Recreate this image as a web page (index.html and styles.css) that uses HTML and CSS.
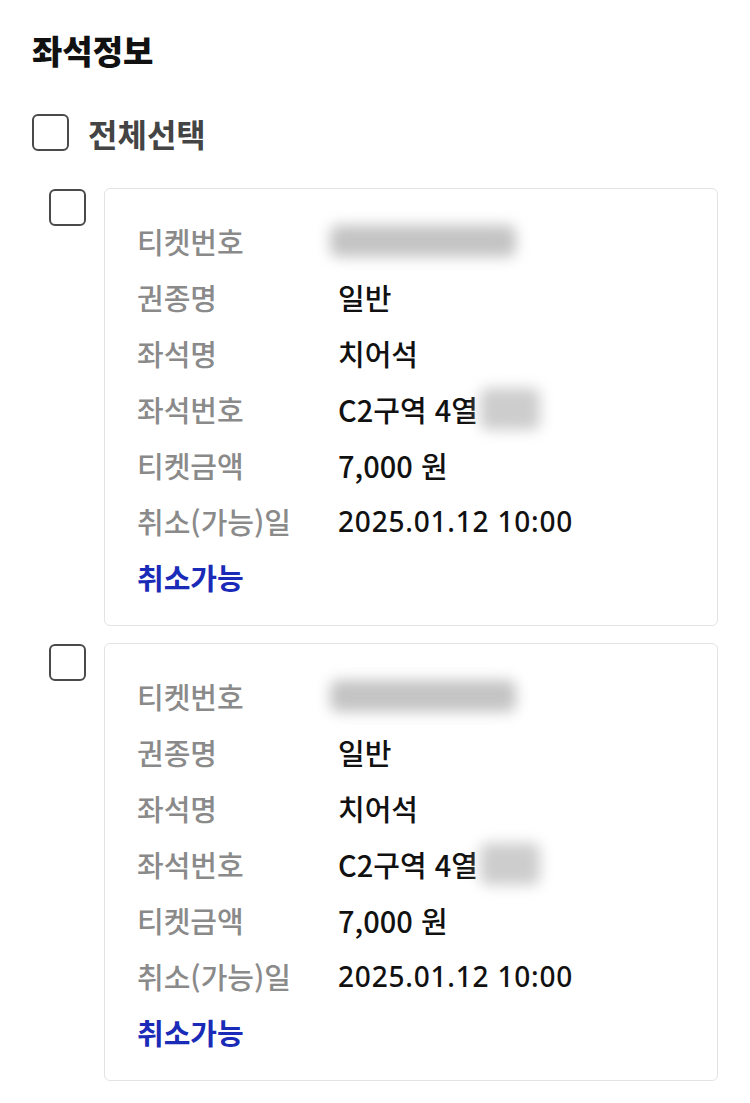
FILE: index.html
```html
<!DOCTYPE html>
<html lang="ko">
<head>
<meta charset="utf-8">
<link rel="stylesheet" href="styles.css">
</head>
<body>
<div class="page">
  <h1 class="title">좌석정보</h1>
  <div class="select-all">
    <span class="box"></span>
    <span class="select-label">전체선택</span>
  </div>

  <div class="ticket">
    <span class="box small"></span>
    <div class="card">
      <div class="row"><span class="lbl">티켓번호</span><span class="val"><span class="blur wide"></span></span></div>
      <div class="row"><span class="lbl">권종명</span><span class="val">일반</span></div>
      <div class="row"><span class="lbl">좌석명</span><span class="val">치어석</span></div>
      <div class="row"><span class="lbl">좌석번호</span><span class="val">C2구역 4열<span class="blur short"></span></span></div>
      <div class="row"><span class="lbl">티켓금액</span><span class="val">7,000 원</span></div>
      <div class="row"><span class="lbl">취소(가능)일</span><span class="val num">2025.01.12 10:00</span></div>
      <div class="row"><span class="link">취소가능</span></div>
    </div>
  </div>

  <div class="ticket">
    <span class="box small"></span>
    <div class="card">
      <div class="row"><span class="lbl">티켓번호</span><span class="val"><span class="blur wide"></span></span></div>
      <div class="row"><span class="lbl">권종명</span><span class="val">일반</span></div>
      <div class="row"><span class="lbl">좌석명</span><span class="val">치어석</span></div>
      <div class="row"><span class="lbl">좌석번호</span><span class="val">C2구역 4열<span class="blur short"></span></span></div>
      <div class="row"><span class="lbl">티켓금액</span><span class="val">7,000 원</span></div>
      <div class="row"><span class="lbl">취소(가능)일</span><span class="val num">2025.01.12 10:00</span></div>
      <div class="row"><span class="link">취소가능</span></div>
    </div>
  </div>
</div>
</body>
</html>
```

FILE: styles.css
```css
html, body {
  margin: 0;
  padding: 0;
  background: #ffffff;
}
body {
  font-family: "Noto Sans CJK KR", "Noto Sans", sans-serif;
  color: #111;
}
.page {
  width: 750px;
  padding: 30px 32px 0 32px;
  box-sizing: border-box;
}
.title {
  margin: 0;
  font-size: 33px;
  font-weight: 900;
  line-height: 40px;
  color: #111;
}
.select-all {
  display: flex;
  align-items: center;
  gap: 19px;
  margin-top: 44px;
  height: 37px;
}
.box {
  width: 37px;
  height: 37px;
  box-sizing: border-box;
  border: 2px solid #4a4a4a;
  border-radius: 6px;
  flex: none;
}
.select-label {
  font-size: 32px;
  font-weight: 700;
  color: #444;
}
.ticket {
  display: flex;
  align-items: flex-start;
  gap: 18px;
  margin-top: 37px;
  margin-left: 17px;
}
.ticket + .ticket {
  margin-top: 17px;
}
.box.small {
  margin-top: 1px;
}
.card {
  width: 614px;
  box-sizing: border-box;
  border: 1.5px solid #e3e3e3;
  border-radius: 6px;
  padding: 24px 0 20px 32px;
}
.row {
  display: flex;
  align-items: center;
  height: 56px;
  font-size: 29px;
}
.lbl {
  width: 201px;
  flex: none;
  color: #8a8a8a;
  font-weight: 500;
}
.val {
  display: flex;
  align-items: center;
  color: #111;
  font-weight: 500;
  font-size: 29px;
}
.num {
  font-family: "Noto Sans", sans-serif;
  font-size: 28px;
  letter-spacing: 0.8px;
}
.link {
  color: #1a2bb8;
  font-weight: 700;
}
.blur {
  display: inline-block;
  background: #c4c4c4;
  filter: blur(7px);
  border-radius: 8px;
}
.blur.wide {
  width: 186px;
  height: 32px;
  margin-left: -8px;
}
.blur.short {
  width: 60px;
  height: 42px;
  margin-left: 2px;
  background: #cdcdcd;
}
```
